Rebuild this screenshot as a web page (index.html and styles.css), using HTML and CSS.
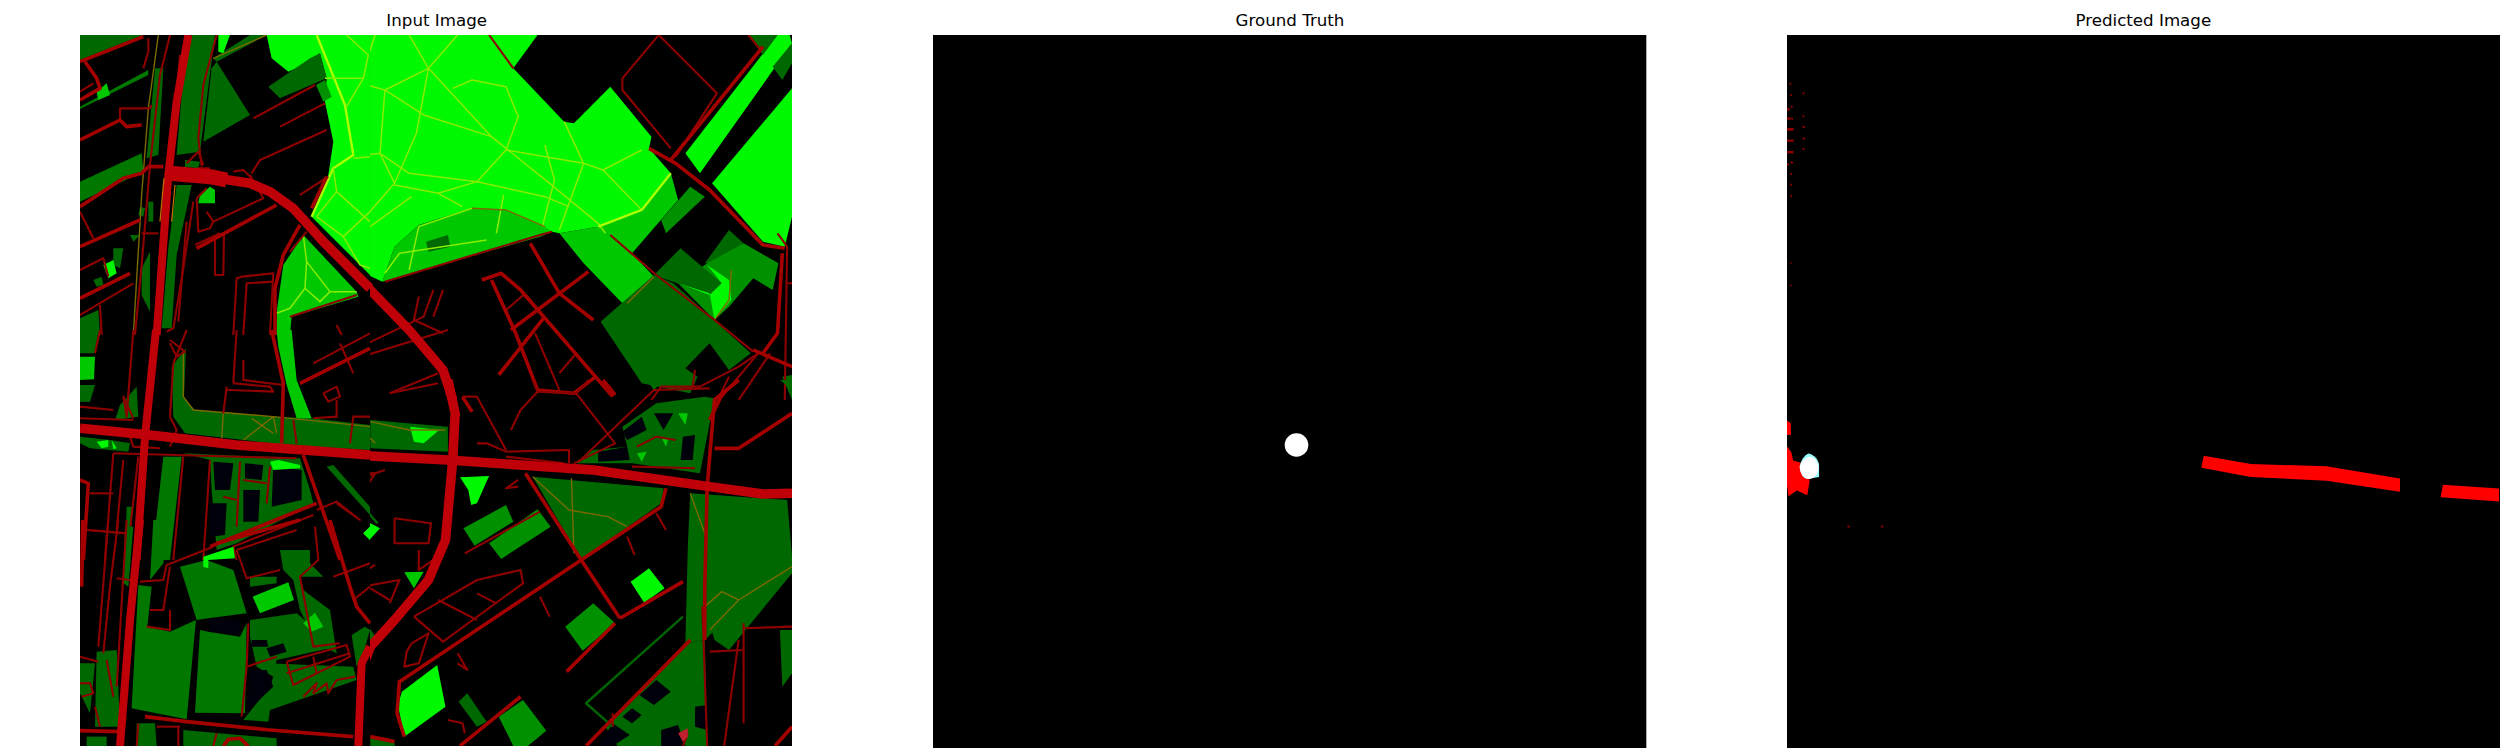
FILE: index.html
```html
<!DOCTYPE html>
<html lang="en">
<head>
<meta charset="utf-8">
<title>Input, ground truth and predicted image</title>
<link rel="stylesheet" href="styles.css">
</head>
<body>
<main class="figure">
  <section class="panel">
    <h2 class="title">Input Image</h2>
    <svg class="plot" viewBox="0 0 713.33 713.33" aria-label="Input map">
      <rect class="bg" width="712" height="711"/>
      <svg width="712" height="711" viewBox="0 0 712 711">
      <g transform="translate(-19.87 -35) scale(.4847 .3333)">
        <!-- right of the left column, upper half: areas -->
        <polygon class="bright" points="428,105 885,105 935,205 1040,365 1060,370 1135,260 1220,410 1215,445 1260,520 1200,630 1110,680 1030,700 1015,695 850,625 740,675 690,740 665,845 635,825 530,680 520,640 555,500 565,400 555,330 540,250 470,215 440,165"/>
        <polygon class="bright" points="885,105 985,105 935,205"/>
        <polygon class="med" points="665,845 690,740 740,675 850,625 920,630 1000,680 1015,695 990,710"/>
        <polygon class="dark" points="755,725 800,705 805,740 760,755"/>
        <polygon class="med" points="1030,700 1110,680 1200,630 1260,520 1275,600 1180,760 1225,830 1160,910 1080,790"/>
        <polygon class="bright" points="1480,105 1505,105 1510,130 1320,520 1290,460"/>
        <polygon class="dark" points="1420,105 1480,105 1450,165"/>
        <polygon class="dark" points="1470,200 1510,130 1510,190 1490,240"/>
        <polygon class="bright" points="1510,265 1345,550 1450,725 1495,740 1510,650"/>
        <polygon class="mid" points="1300,560 1330,590 1250,700 1240,660"/>
        <polygon class="dark" points="1380,690 1410,730 1350,790 1330,790"/>
        <polygon class="mid" points="1410,730 1482,790 1470,870 1430,835 1380,920 1350,960 1275,850 1335,790"/>
        <polygon class="dark" points="1225,825 1280,745 1365,850 1340,885"/>
        <polygon class="bright" points="1335,795 1365,850 1340,885 1275,850 1340,880 1350,960 1385,900 1380,840"/>
        <polygon class="dark" points="1115,965 1225,825 1265,850 1425,1060 1380,1110 1340,1030 1290,1105 1315,1130 1300,1180 1200,1150"/>
        <polygon class="dark" points="1490,1130 1510,1125 1510,1200"/>
        <g class="path-hi">
          <polyline points="720,105 760,205 890,410 1010,550 1110,670 1125,700"/>
          <polyline points="820,105 760,205 670,270 620,250"/>
          <polyline points="650,105 635,170"/>
          <polyline points="670,270 750,345 890,410"/>
          <polyline points="670,270 660,460 690,550 600,700 590,780"/>
          <polyline points="760,205 735,400 690,550"/>
          <polyline points="605,470 660,460 720,520 860,545 920,450 945,350 920,260 850,240 810,265"/>
          <polyline points="860,545 1000,590 1050,620"/>
          <polyline points="860,545 780,580 690,555"/>
          <polyline points="780,580 830,620"/>
          <polyline points="725,590 620,700"/>
          <polyline points="1000,435 1020,540 995,680"/>
          <polyline points="1040,365 1080,490 1120,510 1200,450"/>
          <polyline points="1120,510 1200,630"/>
          <polyline points="1080,490 1030,690"/>
          <polyline points="920,450 1040,480 1080,490"/>
          <polyline class="w3" points="1110,680 1200,630 1260,520"/>
          <polyline points="915,585 900,700"/>
          <polyline points="850,625 740,680 720,810"/>
          <polyline points="670,820 700,760 880,720"/>
        </g>
        <g class="path-lo">
          <polyline points="850,625 920,630 1000,680"/>
          <polyline points="1225,830 1170,910"/>
          <polyline points="1385,810 1380,900 1350,960"/>
        </g>
        <g class="road-thin">
          <polyline points="1235,105 1160,235 1160,270 1260,445"/>
          <polyline points="1235,105 1355,280 1270,470"/>
          <polyline points="1420,105 1445,150"/>
          <polyline points="400,1170 800,990"/>
          <polyline points="490,1130 750,950 770,870"/>
          <polyline points="680,1180 780,1120"/>
          <polyline points="740,890 730,960 790,1000"/>
          <polyline points="790,870 770,950"/>
          <polyline points="960,880 920,930"/>
          <polyline points="980,1000 1030,1170"/>
          <polyline points="1030,1120 1065,1060"/>
          <polyline points="1220,1200 1240,1160 1320,1160 1400,1100 1440,1060"/>
          <polyline points="1480,700 1500,740 1495,1200"/>
          <polyline points="1440,1060 1360,1200"/>
          <polyline points="1465,1060 1400,1200"/>
          <polyline points="1500,850 1510,850"/>
          <polyline points="1310,1110 1305,1160"/>
          <polyline points="1380,1130 1360,1190"/>
          <polyline points="1015,695 990,705 670,845"/>
          <polyline points="1135,705 1230,825 1350,960 1430,1055"/>
          <polyline points="885,105 935,205"/>
        </g>
        <g class="road-mid">
          <polyline points="1215,445 1270,490 1340,570 1450,735 1495,745"/>
          <polyline points="1450,140 1260,480"/>
          <polyline points="970,730 1030,880 1100,960"/>
          <polyline points="1090,815 930,990"/>
          <polyline points="905,1125 1000,950"/>
          <polyline points="870,840 910,820 950,870 1140,1190"/>
          <polyline points="890,840 940,1000 985,1170 1060,1180 1105,1130"/>
          <polyline points="1430,1050 1510,1100"/>
          <polyline points="1490,760 1480,1000 1450,1060"/>
        </g>
        <g class="road-big">
          <polyline class="w12" points="620,840 720,990 790,1110 810,1200"/>
        </g>
      </g>

      <g transform="translate(-19.87 345) scale(.4847 .3333)">
        <!-- right of the left column, lower half: areas -->
        <polygon class="dark" points="640,120 800,140 800,215 640,205"/>
        <polygon class="bright" points="722,140 782,150 750,190 730,185"/>
        <polygon class="dark" points="1160,140 1230,70 1330,50 1350,55 1320,280 1180,250 1060,250 1100,210 1170,200"/>
        <polygon class="blackp" points="1160,155 1200,110 1210,150 1170,180"/>
        <polygon class="blackp" points="1225,100 1265,100 1245,150"/>
        <polygon class="blackp" points="1285,170 1310,165 1305,240 1280,240"/>
        <polygon class="blackp" points="1110,215 1170,200 1175,240 1110,245"/>
        <polygon class="med" points="1275,100 1295,100 1290,135"/>
        <polygon class="med" points="1240,170 1255,175 1250,200"/>
        <polygon class="med" points="1190,220 1210,215 1200,245"/>
        <polygon class="dark" points="975,290 1245,325 1240,370 1075,540"/>
        <polygon class="dark" points="1300,340 1500,360 1510,530 1330,780 1290,790 1295,500"/>
        <polygon class="dark" points="1330,680 1510,530 1510,580 1380,810 1350,780"/>
        <polygon class="mid" points="920,375 935,425 855,497 832,445"/>
        <polygon class="mid" points="985,388 1012,440 910,537 885,490"/>
        <polygon class="bright" points="825,292 885,288 860,370 848,375 842,330"/>
        <polygon class="bright" points="640,430 660,445 638,480 622,460"/>
        <polygon class="dark" points="600,740 635,735 650,770 620,840"/>
        <polygon class="med" points="710,577 750,575 730,625"/>
        <polygon class="bright" points="778,855 795,980 710,1070 697,975 705,935"/>
        <polygon class="mid" points="1100,670 1145,730 1078,812 1042,740"/>
        <polygon class="bright" points="1215,565 1247,625 1205,668 1177,605"/>
        <polygon class="mid" points="955,960 1003,1052 965,1098 935,1098 905,1010"/>
        <polygon class="dark" points="840,940 880,1025 860,1040 822,965"/>
        <polygon class="dark" points="1290,790 1330,780 1335,1098 1150,1098 1125,1040"/>
        <polygon class="blackp" points="1230,900 1260,935 1225,975 1195,945"/>
        <polygon class="blackp" points="1180,985 1200,1005 1180,1030 1160,1010"/>
        <polygon class="blackp" points="1140,1030 1175,1065 1140,1098 1110,1098"/>
        <polygon class="blackp" points="1310,980 1335,975 1335,1050 1310,1040"/>
        <polygon class="blackp" points="1240,1050 1275,1035 1290,1098 1240,1098"/>
        <polygon class="dark" points="1485,750 1510,750 1510,880 1490,920"/>
        <polygon class="dark" points="1210,0 1245,0 1225,30"/>
        <polygon class="dark" points="1485,0 1510,0 1510,30"/>
        <polygon class="dark" points="640,1068 690,1090 690,1098 640,1098"/>
        <polyline class="line-dark" points="550,258 655,430"/>
        <polyline class="line-dark" points="1285,710 1085,970 1140,1040"/>
        <g class="path-lo">
          <polyline points="640,125 720,150 795,150"/>
          <polyline points="640,175 650,190"/>
          <polyline points="975,290 1050,390 1130,410 1170,440"/>
          <polyline points="1055,295 1060,520"/>
          <polyline points="1300,340 1335,480"/>
          <polyline points="1510,560 1400,660 1365,635 1330,680"/>
          <polyline points="1400,660 1340,750"/>
        </g>
        <g class="road-thin">
          <polyline points="680,40 780,10"/>
          <polyline points="610,280 650,280 625,335 610,300 670,270"/>
          <polyline points="690,415 765,430 760,490 690,490 690,415"/>
          <polyline points="740,510 740,570 780,530"/>
          <polyline points="600,600 650,555"/>
          <polyline points="605,625 700,600 680,670"/>
          <polyline points="640,625 680,660"/>
          <polyline points="725,790 760,760 740,850 710,860 715,815 725,790"/>
          <polyline points="730,710 860,600 950,570 955,610 790,785 730,710"/>
          <polyline points="780,660 860,720"/>
          <polyline points="860,640 900,670"/>
          <polyline points="820,850 840,870 820,820"/>
          <polyline points="990,650 1010,710"/>
          <polyline points="1170,470 1185,525"/>
          <polyline points="1230,400 1250,450"/>
          <polyline points="835,520 990,395"/>
          <polyline points="945,300 920,325 945,320"/>
          <polyline points="860,190 880,190 920,215 1050,210 1050,250"/>
          <polyline points="920,230 1040,250"/>
          <polyline points="930,150 950,90 985,35 975,0"/>
          <polyline points="830,50 860,50 920,210"/>
          <polyline points="985,35 1065,40 1090,0"/>
          <polyline points="1065,40 1145,190 1060,250"/>
          <polyline points="1070,245 1225,30 1340,25"/>
          <polyline points="1180,260 1310,265"/>
          <polyline points="1190,200 1230,170 1270,180"/>
          <polyline points="1325,680 1335,1098"/>
          <polyline points="1410,730 1410,810 1340,815"/>
          <polyline points="1410,745 1510,740"/>
          <polyline points="1410,810 1410,1030"/>
          <polyline points="1140,1040 1140,1000"/>
          <polyline points="1285,1098 1295,1060"/>
          <polyline points="800,1020 830,1030 835,1060"/>
          <polyline points="1370,1098 1400,780"/>
        </g>
        <g class="road-mid">
          <polyline points="960,280 1075,540 1155,715"/>
          <polyline points="1250,325 1240,380 1075,540 700,905 695,1000 710,1070"/>
          <polyline points="1155,715 1285,605"/>
          <polyline points="1145,730 1045,875"/>
          <polyline points="950,950 825,1098"/>
          <polyline points="1300,780 1085,1098"/>
          <polyline points="1510,1040 1475,1098"/>
          <polyline points="1510,100 1400,205 1350,205"/>
          <polyline points="1400,0 1350,60 1335,320 1330,620 1330,780"/>
          <polyline points="1370,30 1340,120"/>
          <polyline points="640,1070 690,1085"/>
          <polyline points="1120,0 1145,45"/>
          <polyline points="830,50 850,95"/>
        </g>
        <g class="road-big">
          <polyline class="w12" points="800,0 815,100 810,240 795,480 760,600 690,720 640,800 620,880 620,1098"/>
          <polyline class="w12" points="600,225 800,240 1100,270 1340,320 1450,342 1510,340"/>
        </g>
        <polygon class="rose" points="1275,1060 1295,1045 1295,1070 1285,1085"/>
      </g>

      <!-- left column, upper part -->
      <rect class="bg" width="290" height="711"/>
      <g transform="translate(-10 0) scale(.3333)">
        <polygon class="dark" points="30,0 220,0 30,75"/>
        <polygon class="mid2" points="30,215 235,105 235,120 30,222"/>
        <polygon class="med" points="80,170 110,145 120,180 85,195"/>
        <polygon class="mid2" points="30,440 215,355 220,410 30,500"/>
        <polygon class="dark" points="365,0 435,0 390,350 320,360 340,120"/>
        <polygon class="dark" points="440,80 540,240 400,320 425,100"/>
        <polygon class="dark" points="430,70 540,0 590,0 440,80"/>
        <polygon class="bright" points="445,0 480,0 460,55 445,50"/>
        <polygon class="bright" points="590,0 900,0 900,720 725,545 775,420 790,320 765,200 770,130 750,55 700,90 655,110 605,70"/>
        <polygon class="dark" points="595,155 720,70 750,55 770,130 630,190"/>
        <polygon class="mid" points="738,150 765,135 785,185 760,200"/>
        <polygon class="med" points="700,600 860,770 865,785 665,845 660,900 620,900 620,830 640,690"/>
        <polygon class="dark" points="210,515 225,520 220,545 205,540"/>
        <polygon class="dark" points="235,500 250,500 250,560 235,560"/>
        <polygon class="dark" points="130,640 160,640 150,700 130,690"/>
        <polygon class="dark" points="180,600 210,600 190,620"/>
        <polygon class="dark" points="255,100 280,100 265,360 230,370"/>
        <polygon class="dark" points="215,700 240,650 240,830 215,780"/>
        <polygon class="bright" points="100,690 130,675 140,715 115,730"/>
        <polygon class="dark" points="70,735 95,725 100,750 80,755"/>
        <polygon class="med" points="390,480 420,455 435,465 435,505 385,505"/>
        <polygon class="dark" points="345,375 390,380 385,400 345,395"/>
        <polygon class="dark" points="320,450 365,450 320,660 305,880 275,880 295,640"/>
        <polygon class="dark" points="30,850 85,825 90,900 30,900"/>
        <g class="path-hi">
          <polyline class="w3" points="740,0 825,210 850,360 790,400 725,545"/>
          <polyline points="765,130 880,130 895,60 830,0"/>
          <polyline points="880,130 830,215"/>
          <polyline points="850,370 900,365"/>
          <polyline points="790,400 800,470 740,545"/>
          <polyline points="800,470 900,560"/>
          <polyline points="740,545 820,605 900,530"/>
          <polyline points="820,605 870,690 900,700"/>
          <polyline points="700,600 710,680 705,760 660,820 620,835"/>
          <polyline points="710,680 780,770 860,770"/>
          <polyline points="705,760 750,800 780,770"/>
        </g>
        <g class="path-lo">
          <polyline points="265,0 235,220 215,480 190,900"/>
          <polyline points="430,70 590,0"/>
        </g>
        <g class="road-thin">
          <polyline points="235,10 235,50 220,100"/>
          <polyline points="300,0 270,120 240,390 215,690 195,900"/>
          <polyline points="330,60 318,200"/>
          <polyline points="440,0 400,150 385,310 395,395"/>
          <polyline points="350,385 385,350 400,390"/>
          <polyline points="30,170 70,145"/>
          <polyline points="30,530 70,610"/>
          <polyline points="30,705 100,670 115,725"/>
          <polyline points="30,840 190,745"/>
          <polyline points="90,810 95,900"/>
          <polyline points="215,595 265,595"/>
          <polyline points="150,255 150,220 240,220 245,210"/>
          <polyline points="550,250 735,150"/>
          <polyline points="630,275 765,205"/>
          <polyline points="545,415 570,375 770,285"/>
          <polyline points="690,480 775,425"/>
          <polyline points="490,410 520,405 545,430"/>
          <polyline points="380,490 410,460"/>
          <polyline points="375,630 450,595"/>
          <polyline points="410,530 430,560 420,580 385,590 380,490"/>
          <polyline points="430,560 580,490 540,420"/>
          <polyline points="435,600 435,720 460,720 462,595"/>
          <polyline points="370,500 340,700 310,880 290,890"/>
          <polyline points="350,560 325,860"/>
          <polyline points="710,590 660,650"/>
          <polyline points="490,900 500,730 515,725 610,715 600,900"/>
          <polyline points="520,900 530,745 610,740"/>
          <polyline points="800,870 815,900"/>
          <polyline points="660,845 860,780"/>
          <polyline points="380,400 420,400"/>
        </g>
        <g class="road-mid">
          <polyline points="30,80 220,5"/>
          <polyline points="45,80 80,130 90,160 30,195"/>
          <polyline points="30,315 150,255 170,275 215,270"/>
          <polyline points="30,515 160,430 215,415 235,395 280,395"/>
          <polyline points="30,635 210,555"/>
          <polyline points="30,790 180,715"/>
          <polyline points="770,425 725,520"/>
          <polyline points="380,640 620,510"/>
          <polyline points="690,570 640,660 615,760 615,900"/>
        </g>
        <g class="road-big">
          <polyline points="355,0 320,200 295,420 260,900"/>
          <polyline class="w18" points="300,415 420,425 470,435"/>
          <polyline class="w12" points="430,428 540,445 600,470 670,520 760,620 900,760"/>
        </g>
        <polyline class="orange" points="282,430 270,560"/>
        <polyline class="orange" points="315,450 305,560"/>
      </g>

      <!-- left column, middle part -->
      <g transform="translate(-10 295) scale(.3333)">
        <polygon class="dark" points="30,0 85,0 75,70 30,70"/>
        <polygon class="med" points="30,80 75,80 72,148 30,150"/>
        <polygon class="dark" points="30,165 75,165 60,215 30,215"/>
        <polygon class="dark" points="150,225 200,170 205,260 135,270"/>
        <polygon class="dark" points="305,110 348,55 342,205 375,240 640,262 725,265 900,285 900,360 650,345 345,310 310,260"/>
        <polygon class="med" points="620,0 665,0 680,150 725,265 680,265 650,165 625,50"/>
        <polygon class="dark" points="30,320 120,330 180,340 175,365 60,355 30,340"/>
        <polygon class="bright" points="80,335 115,330 115,350 95,355"/>
        <polygon class="bright" points="125,330 140,355 130,358"/>
        <polygon class="mid2" points="280,380 335,380 300,690 245,690"/>
        <polygon class="dark" points="340,370 690,385 720,480 730,520 500,640 440,660 425,480 420,390"/>
        <polygon class="blackp" points="430,395 490,400 480,480 435,480"/>
        <polygon class="blackp" points="525,400 580,405 575,450 525,445"/>
        <polygon class="blackp" points="610,410 695,420 695,510 605,530"/>
        <polygon class="blackp" points="520,480 570,480 565,575 520,575"/>
        <polygon class="blackp" points="420,520 470,520 465,615 420,620"/>
        <polygon class="bright" points="600,395 625,390 690,405 690,415 610,420"/>
        <polygon class="dark" points="770,410 790,405 900,530 900,555"/>
        <polygon class="bright" points="880,610 900,590 900,630"/>
        <polygon class="dark" points="170,530 190,530 175,690 165,690"/>
        <g class="path-lo">
          <polyline points="340,60 340,200 370,240 610,260 900,290"/>
          <polyline points="460,250 455,325"/>
          <polyline points="520,330 610,260 620,310"/>
          <polyline points="545,265 610,310"/>
        </g>
        <g class="road-thin">
          <polyline points="30,230 130,240"/>
          <polyline points="30,265 190,270"/>
          <polyline points="130,370 105,690"/>
          <polyline points="160,390 140,600"/>
          <polyline points="205,380 170,690"/>
          <polyline points="60,490 130,490"/>
          <polyline points="55,600 170,610"/>
          <polyline points="340,380 310,690"/>
          <polyline points="420,390 400,690"/>
          <polyline points="510,395 500,590"/>
          <polyline points="600,410 590,520"/>
          <polyline points="520,450 590,460"/>
          <polyline points="460,500 500,510"/>
          <polyline points="500,690 490,650 730,555"/>
          <polyline points="800,520 870,570 800,515 740,540"/>
          <polyline points="470,170 460,250"/>
          <polyline points="490,160 600,170 610,185 480,180 470,180"/>
          <polyline points="500,0 490,160"/>
          <polyline points="520,90 520,150 640,165"/>
          <polyline points="730,100 900,10"/>
          <polyline points="850,130 810,40"/>
          <polyline points="760,190 800,170 810,200 775,215 760,190"/>
          <polyline points="800,210 800,260 730,265"/>
          <polyline points="300,30 345,65 320,80 300,40"/>
          <polyline points="900,260 850,260 840,340"/>
          <polyline points="130,370 680,385"/>
          <polyline points="180,320 190,350 270,355"/>
          <polyline points="300,260 320,300 300,350"/>
          <polyline points="670,270 680,340"/>
          <polyline points="190,0 170,260 160,200 190,265"/>
          <polyline points="90,0 75,70"/>
          <polyline points="350,0 310,100 300,260"/>
        </g>
        <g class="road-mid">
          <polyline points="605,0 640,160 635,340"/>
          <polyline points="690,160 900,55"/>
          <polyline points="30,450 55,460 40,690"/>
          <polyline points="700,375 810,690"/>
          <polyline points="420,650 740,520"/>
        </g>
        <g class="road-big">
          <polyline points="258,0 225,320 200,690"/>
          <polyline class="w12" points="30,295 240,315 500,345 900,375"/>
        </g>
      </g>

      <!-- left column, lower part -->
      <g transform="translate(-10 485) scale(.3333)">
        <polygon class="mid2" points="250,0 295,0 280,130 240,180"/>
        <polygon class="mid2" points="205,195 245,200 232,320 300,335 378,300 350,598 185,565"/>
        <polygon class="mid2" points="330,140 410,120 490,150 530,280 415,295 380,300"/>
        <polygon class="mid2" points="390,330 415,335 510,350 530,310 525,580 375,578"/>
        <polygon class="dark" points="540,300 680,280 800,380 620,420 610,470 560,440 540,350"/>
        <polygon class="dark" points="590,430 850,440 860,480 600,570 595,605 520,600 600,500 610,470"/>
        <polygon class="dark" points="630,90 720,90 720,130 760,170 690,170 700,210 780,270 800,400 740,370 690,270 670,180 640,150"/>
        <polygon class="dark" points="540,170 620,170 620,190 540,200"/>
        <polygon class="dark" points="845,345 885,320 900,330 880,400 860,440"/>
        <polygon class="dark" points="30,430 75,430 60,580 30,520"/>
        <polygon class="dark" points="80,395 140,390 150,620 75,620"/>
        <polygon class="dark" points="200,610 255,610 260,678 200,678"/>
        <polygon class="dark" points="340,630 620,655 620,678 340,678"/>
        <polygon class="dark" points="50,650 110,650 110,678 50,678"/>
        <polygon class="dark" points="165,20 190,20 175,200 160,190"/>
        <polygon class="bright" points="400,110 490,80 495,115 415,120 415,145 400,140"/>
        <polygon class="med" points="548,230 655,187 672,240 570,280"/>
        <polygon class="med" points="700,310 735,278 760,320 725,335"/>
        <polygon class="bright" points="880,40 900,20 900,60"/>
        <polygon class="blackp" points="415,295 510,300 510,345 420,335"/>
        <polygon class="blackp" points="545,360 590,360 595,380 545,380"/>
        <polygon class="blackp" points="590,385 640,370 650,395 600,410"/>
        <polygon class="blackp" points="540,450 590,450 610,500 530,575"/>
        <g class="road-thin">
          <polyline points="115,0 85,380"/>
          <polyline points="145,0 120,200 100,400"/>
          <polyline points="170,0 140,500"/>
          <polyline points="50,30 170,40"/>
          <polyline points="30,410 85,425"/>
          <polyline points="140,175 180,180"/>
          <polyline points="210,185 280,180 290,135 430,80"/>
          <polyline points="240,270 280,270 300,140"/>
          <polyline points="230,320 300,330 300,270"/>
          <polyline points="500,90 530,175 630,150"/>
          <polyline points="500,90 680,30"/>
          <polyline points="735,20 745,120 690,170 730,380 810,370"/>
          <polyline points="850,240 900,200"/>
          <polyline points="790,170 900,130"/>
          <polyline points="650,425 830,375 840,410 670,495 650,425"/>
          <polyline points="730,410 740,460"/>
          <polyline points="650,460 840,400"/>
          <polyline points="535,310 530,440 515,590"/>
          <polyline points="530,440 620,410"/>
          <polyline points="700,530 740,490 730,520 770,490 775,520 800,480 855,470"/>
          <polyline points="205,610 200,678"/>
          <polyline points="30,490 60,490 70,520 35,530"/>
          <polyline points="75,560 90,620"/>
          <polyline points="110,420 130,530"/>
          <polyline points="260,620 330,620"/>
          <polyline points="325,620 325,678"/>
          <polyline points="440,640 430,678"/>
        </g>
        <g class="road-mid">
          <polyline points="780,0 840,200 860,260 900,310"/>
          <polyline points="38,0 35,200"/>
          <polyline points="225,590 350,605 600,630 850,650"/>
          <polyline points="30,632 150,635"/>
          <polyline points="440,70 690,0"/>
          <polyline points="460,678 475,658 510,655 535,678"/>
        </g>
        <g class="road-big">
          <polyline points="210,0 180,300 150,678"/>
          <polyline points="900,380 875,430 865,678"/>
        </g>
      </g>
      </svg>
    </svg>
  </section>

  <section class="panel">
    <h2 class="title">Ground Truth</h2>
    <svg class="plot" viewBox="0 0 713.33 713.33" aria-label="Ground truth mask">
      <rect class="bg" width="713.33" height="713.33"/>
      <circle class="white" cx="363.5" cy="410" r="11.8"/>
    </svg>
  </section>

  <section class="panel">
    <h2 class="title">Predicted Image</h2>
    <svg class="plot" viewBox="0 0 713.33 713.33" aria-label="Predicted mask">
      <rect class="bg" width="713.33" height="713.33"/>
      <g transform="translate(-26.9 -35) scale(.4719 .4808)">
        <polygon class="red" points="940,948 1040,965 1200,970 1356,995 1356,1023 1200,1000 1040,992 935,973"/>
        <polygon class="red" points="1447,1008 1566,1016 1566,1043 1442,1034"/>
        <polygon class="red" points="57,875 65,880 65,905 57,905"/>
        <polygon class="red" points="57,928 66,940 70,958 95,965 105,1000 100,1030 78,1020 60,1032 57,1010"/>
        <g class="dots">
          <rect x="62" y="172" width="4" height="4"/><rect x="90" y="192" width="4" height="4"/><rect x="64" y="196" width="4" height="4"/>
          <rect x="57" y="225" width="6" height="5"/><rect x="65" y="220" width="4" height="4"/><rect x="90" y="240" width="4" height="4"/>
          <rect x="57" y="244" width="8" height="5"/><rect x="57" y="266" width="14" height="6"/><rect x="90" y="262" width="5" height="4"/>
          <rect x="66" y="245" width="4" height="4"/><rect x="57" y="290" width="14" height="5"/><rect x="90" y="286" width="5" height="4"/>
          <rect x="57" y="314" width="14" height="5"/><rect x="90" y="308" width="4" height="4"/><rect x="64" y="336" width="6" height="4"/>
          <rect x="57" y="340" width="4" height="4"/><rect x="64" y="360" width="4" height="4"/><rect x="64" y="382" width="4" height="4"/>
          <rect x="64" y="406" width="4" height="4"/><rect x="64" y="546" width="3" height="3"/><rect x="64" y="592" width="4" height="3"/>
          <rect x="185" y="1093" width="5" height="4"/><rect x="256" y="1093" width="5" height="4"/>
        </g>
        <path class="cyan" d="M84 970 C86 958 94 946 103 943 C112 945 122 952 125 966 L125 992 L100 996 C92 996 85 986 84 970 Z"/>
        <path class="white" d="M84 972 C86 960 96 951 106 950 C116 951 122 960 124 972 C124 985 116 996 104 996 C92 996 85 986 84 972 Z"/>
      </g>
    </svg>
  </section>
</main>
</body>
</html>
```
FILE: styles.css
```css
html, body {
  margin: 0;
  background: #fff;
}
.figure {
  display: flex;
  gap: 140px;
  width: 2500px;
  height: 750px;
  box-sizing: border-box;
  padding-left: 80px;
  overflow: hidden;
}
.panel {
  flex: 0 0 713.33px;
  display: flex;
  flex-direction: column;
}
.title {
  margin: 0;
  height: 35px;
  box-sizing: border-box;
  padding-top: 11px;
  font: 400 16.67px/20px "DejaVu Sans", sans-serif;
  color: #000;
  text-align: center;
}
.plot {
  display: block;
  width: 713.33px;
  height: 713.33px;
  flex: none;
}
.bg { fill: #000; }
.white { fill: #fff; }
.cyan { fill: #9ff; }
.red, .dots rect { fill: #f00; }
.dots rect { opacity: .55; }
.dark { fill: #006800; }
.mid2 { fill: #007800; }
.mid { fill: #009000; }
.med { fill: #00c800; }
.bright { fill: #00f800; }
.blackp { fill: #00000a; }
.rose { fill: #c02030; }
polyline {
  fill: none;
  stroke-linejoin: round;
  stroke-linecap: butt;
  vector-effect: non-scaling-stroke;
}
.line-dark { stroke: #006400; stroke-width: 2.5px; }
.orange { stroke: #c87000; stroke-width: 1.2px; }
.path-hi polyline { stroke: #88ee00; stroke-width: 1.5px; }
.path-hi polyline.w3 { stroke: #aaff00; stroke-width: 2.4px; }
.path-lo polyline { stroke: #7a6a00; stroke-width: 1.4px; }
.road-thin polyline { stroke: #8e0000; stroke-width: 2.1px; }
.road-mid polyline { stroke: #a50000; stroke-width: 3.6px; }
.road-big polyline { stroke: #c00008; stroke-width: 8px; }
.road-big polyline.w12 { stroke-width: 9.5px; }
.road-big polyline.w18 { stroke-width: 15px; }
```
